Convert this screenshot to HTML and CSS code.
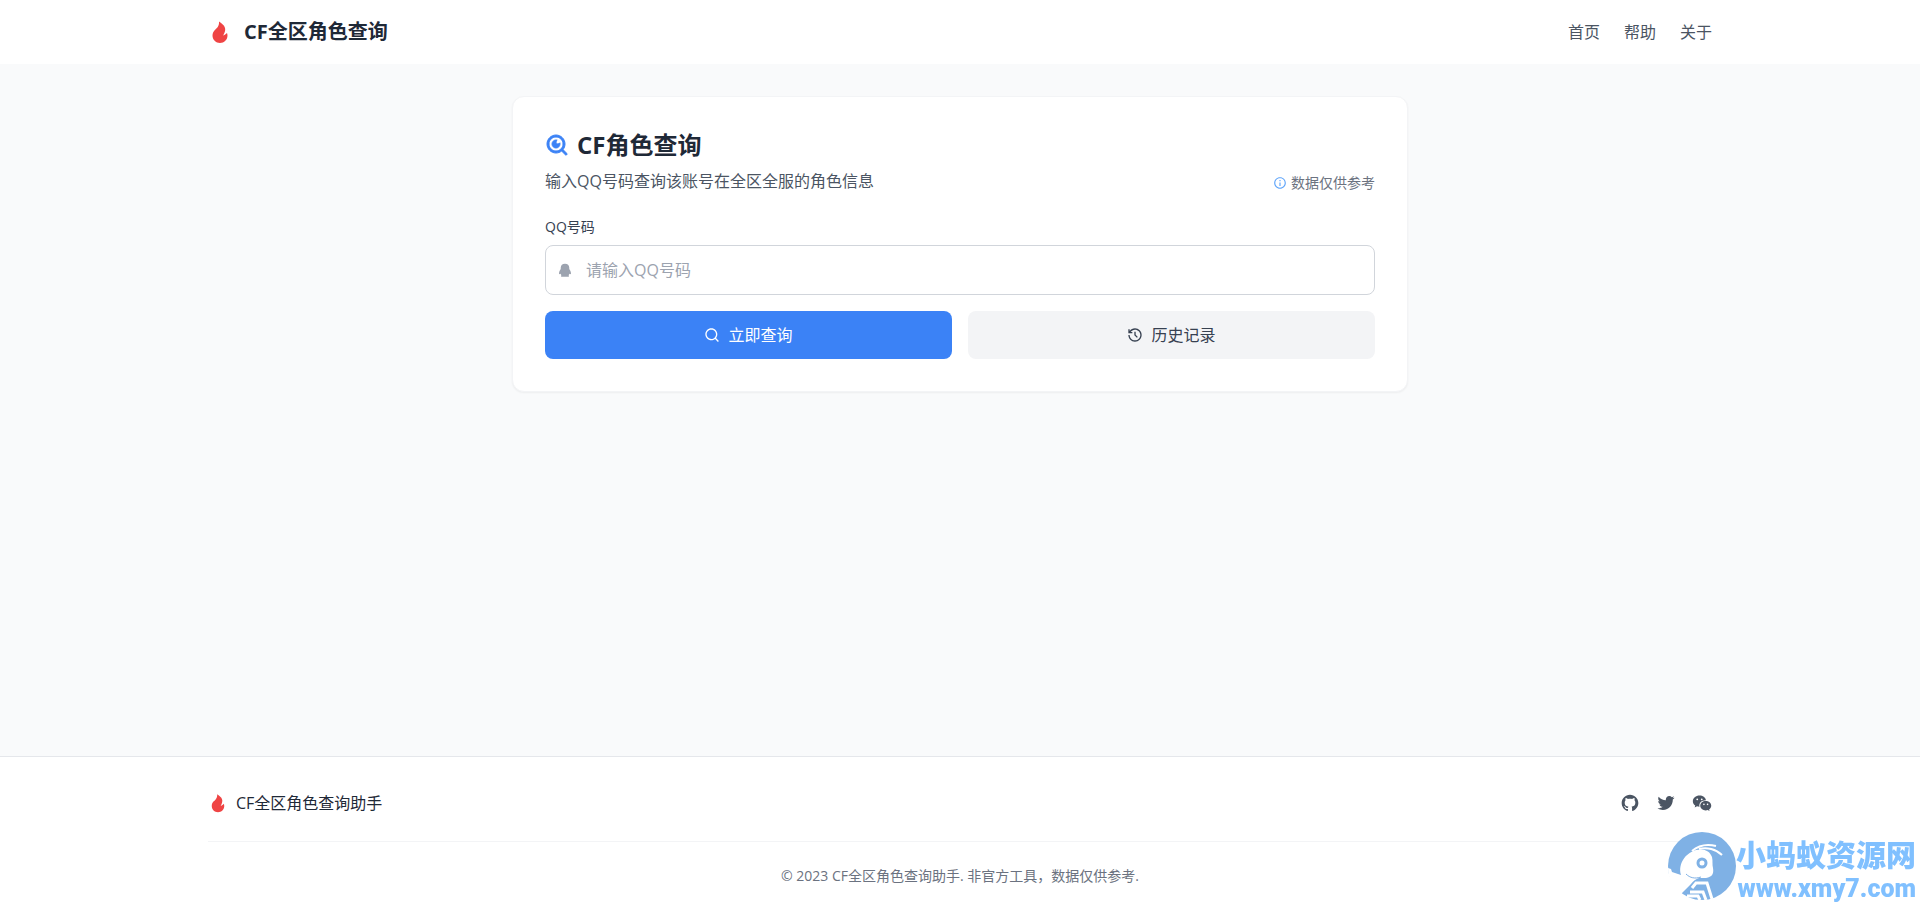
FILE: index.html
```html
<!DOCTYPE html>
<html lang="zh-CN">
<head>
  <meta charset="UTF-8">
  <meta name="viewport" content="width=device-width, initial-scale=1.0">
  <title>CF全区角色查询</title>
  <link rel="stylesheet" href="styles.css">
</head>
<body>
  <!-- icon shapes used more than once -->
  <svg class="sprite" aria-hidden="true">
    <symbol id="icon-fire" viewBox="0 0 24 24">
      <path d="M12 23C16.1421 23 19.5 19.6421 19.5 15.5C19.5 14.6345 19.2697 13.8032 19 13.0296C17.3333 14.6765 16.0667 15.5 15.2 15.5C19.1954 8.5 17 5.5 11 1.5C11.5 6.49951 8.20403 8.77375 6.86179 10.0366C5.40786 11.4045 4.5 13.3462 4.5 15.5C4.5 19.6421 7.85786 23 12 23Z"/>
    </symbol>
  </svg>

  <header class="header">
    <div class="container header-inner">
      <div class="brand">
        <svg class="icon icon-lg fire"><use href="#icon-fire"/></svg>
        <h1>CF全区角色查询</h1>
      </div>
      <nav class="nav">
        <a href="#">首页</a>
        <a href="#">帮助</a>
        <a href="#">关于</a>
      </nav>
    </div>
  </header>

  <main class="main">
    <section class="card">
      <div class="card-head">
        <div>
          <h2>
            <svg class="icon icon-lg search-eye" viewBox="0 0 24 24"><path d="M18.031 16.6168L22.3137 20.8995L20.8995 22.3137L16.6168 18.031C15.0769 19.263 13.124 20 11 20C6.032 20 2 15.968 2 11C2 6.032 6.032 2 11 2C15.968 2 20 6.032 20 11C20 13.124 19.263 15.0769 18.031 16.6168ZM16.0247 15.8748C17.2475 14.6146 18 12.8956 18 11C18 7.1325 14.8675 4 11 4C7.1325 4 4 7.1325 4 11C4 14.8675 7.1325 18 11 18C12.8956 18 14.6146 17.2475 15.8748 16.0247L16.0247 15.8748ZM12.1779 7.17624C11.4834 7.48982 11 8.18846 11 9C11 10.1046 11.8954 11 13 11C13.8115 11 14.5102 10.5166 14.8238 9.82212C14.9383 10.1945 15 10.59 15 11C15 13.2091 13.2091 15 11 15C8.79086 15 7 13.2091 7 11C7 8.79086 8.79086 7 11 7C11.41 7 11.8055 7.06167 12.1779 7.17624Z"/></svg>
            CF角色查询
          </h2>
          <p class="intro">输入QQ号码查询该账号在全区全服的角色信息</p>
        </div>
        <div class="notice">
          <svg class="icon icon-xs" viewBox="0 0 24 24"><path d="M12 22C6.47715 22 2 17.5228 2 12C2 6.47715 6.47715 2 12 2C17.5228 2 22 6.47715 22 12C22 17.5228 17.5228 22 12 22ZM12 20C16.4183 20 20 16.4183 20 12C20 7.58172 16.4183 4 12 4C7.58172 4 4 7.58172 4 12C4 16.4183 7.58172 20 12 20ZM11 7H13V9H11V7ZM11 11H13V17H11V11Z"/></svg>
          <span>数据仅供参考</span>
        </div>
      </div>

      <form id="query-form">
        <label for="qq">QQ号码</label>
        <div class="input-wrap">
          <svg class="icon icon-sm input-icon" viewBox="0 0 24 24"><path d="M12 2.5C8 2.5 5.8 4.8 5.6 8.6V10.6C4.4 12.4 3 15 3 17.2C3 18.6 3.8 18.6 5.2 17.8C5.5 18.6 6.2 19.3 6.9 19.8C5.6 20.3 5.4 22 7 22H17C18.6 22 18.4 20.3 17.1 19.8C17.8 19.3 18.5 18.6 18.8 17.8C20.2 18.6 21 18.6 21 17.2C21 15 19.6 12.4 18.4 10.6V8.6C18.2 4.8 16 2.5 12 2.5Z"/></svg>
          <input type="text" id="qq" name="qq" placeholder="请输入QQ号码">
        </div>
        <div class="actions">
          <button type="submit" class="btn btn-primary">
            <svg class="icon icon-sm" viewBox="0 0 24 24"><path d="M18.031 16.6168L22.3137 20.8995L20.8995 22.3137L16.6168 18.031C15.0769 19.263 13.124 20 11 20C6.032 20 2 15.968 2 11C2 6.032 6.032 2 11 2C15.968 2 20 6.032 20 11C20 13.124 19.263 15.0769 18.031 16.6168ZM16.0247 15.8748C17.2475 14.6146 18 12.8956 18 11C18 7.1325 14.8675 4 11 4C7.1325 4 4 7.1325 4 11C4 14.8675 7.1325 18 11 18C12.8956 18 14.6146 17.2475 15.8748 16.0247L16.0247 15.8748Z"/></svg>
            立即查询
          </button>
          <button type="button" class="btn btn-light">
            <svg class="icon icon-sm" viewBox="0 0 24 24"><path d="M12 2C17.5228 2 22 6.47715 22 12C22 17.5228 17.5228 22 12 22C6.47715 22 2 17.5228 2 12H4C4 16.4183 7.58172 20 12 20C16.4183 20 20 16.4183 20 12C20 7.58172 16.4183 4 12 4C9.25022 4 6.82447 5.38734 5.38451 7.50024L8 7.5V9.5H2V3.5H4L3.99989 5.99918C5.82434 3.57075 8.72873 2 12 2ZM13 7L12.9998 11.585L16.2426 14.8284L14.8284 16.2426L10.9998 12.413L11 7H13Z"/></svg>
            历史记录
          </button>
        </div>
      </form>
    </section>
  </main>

  <footer class="footer">
    <div class="container">
      <div class="footer-top">
        <div class="footer-brand">
          <svg class="icon icon-md fire"><use href="#icon-fire"/></svg>
          <span>CF全区角色查询助手</span>
        </div>
        <div class="social">
          <a href="#" aria-label="GitHub">
            <svg class="icon icon-md" viewBox="0 0 24 24"><path d="M12.001 2C6.47598 2 2.00098 6.475 2.00098 12C2.00098 16.425 4.86348 20.1625 8.83848 21.4875C9.33848 21.575 9.52598 21.275 9.52598 21.0125C9.52598 20.775 9.51348 19.9875 9.51348 19.15C7.00098 19.6125 6.35098 18.5375 6.15098 17.975C6.03848 17.6875 5.55098 16.8 5.12598 16.5625C4.77598 16.375 4.27598 15.9125 5.11348 15.9C5.90098 15.8875 6.46348 16.625 6.65098 16.925C7.55098 18.4375 8.98848 18.0125 9.56348 17.75C9.65098 17.1 9.91348 16.6625 10.201 16.4125C7.97598 16.1625 5.65098 15.3 5.65098 11.475C5.65098 10.3875 6.03848 9.4875 6.67598 8.7875C6.57598 8.5375 6.22598 7.5125 6.77598 6.1375C6.77598 6.1375 7.61348 5.875 9.52598 7.1625C10.326 6.9375 11.176 6.825 12.026 6.825C12.876 6.825 13.726 6.9375 14.526 7.1625C16.4385 5.8625 17.276 6.1375 17.276 6.1375C17.826 7.5125 17.476 8.5375 17.376 8.7875C18.0135 9.4875 18.401 10.375 18.401 11.475C18.401 15.3125 16.0635 16.1625 13.8385 16.4125C14.201 16.725 14.5135 17.325 14.5135 18.2625C14.5135 19.6 14.501 20.675 14.501 21.0125C14.501 21.275 14.6885 21.5875 15.1885 21.4875C19.259 20.1133 21.9999 16.2963 22.001 12C22.001 6.475 17.526 2 12.001 2Z"/></svg>
          </a>
          <a href="#" aria-label="Twitter">
            <svg class="icon icon-md" viewBox="0 0 24 24"><path d="M22.2125 5.65605C21.4491 5.99375 20.6395 6.21555 19.8106 6.31411C20.6839 5.79132 21.3374 4.9689 21.6493 4.00005C20.8287 4.48761 19.9305 4.83077 18.9938 5.01461C18.2031 4.17106 17.098 3.69303 15.9418 3.69434C13.6326 3.69434 11.7597 5.56661 11.7597 7.87683C11.7597 8.20458 11.7973 8.52242 11.8676 8.82909C8.39047 8.65404 5.31007 6.99005 3.24678 4.45941C2.87529 5.09767 2.68005 5.82318 2.68104 6.56167C2.68104 8.01259 3.4196 9.29324 4.54149 10.043C3.87737 10.022 3.22788 9.84264 2.64718 9.51973C2.64654 9.5373 2.64654 9.55487 2.64654 9.57148C2.64654 11.5984 4.08819 13.2892 6.00199 13.6731C5.6428 13.7703 5.27232 13.8194 4.90022 13.8191C4.62997 13.8191 4.36771 13.7942 4.11279 13.7453C4.64531 15.4065 6.18886 16.6159 8.0196 16.6491C6.53813 17.8118 4.70869 18.4426 2.82543 18.4399C2.49212 18.4402 2.15909 18.4205 1.82812 18.3811C3.74004 19.6102 5.96552 20.2625 8.23842 20.2601C15.9316 20.2601 20.138 13.8875 20.138 8.36111C20.138 8.1803 20.1336 7.99886 20.1256 7.81997C20.9443 7.22845 21.651 6.49567 22.2125 5.65605Z"/></svg>
          </a>
          <a href="#" aria-label="微信">
            <svg class="icon icon-md" viewBox="0 0 24 24" fill-rule="evenodd">
              <path d="M9 3C4.6 3 1 6 1 9.8C1 12 2.1 13.8 3.9 15.1L3.2 17.4L6 16C6.9 16.3 7.9 16.5 9 16.5C8 12 11.5 8.6 16.8 8.7C16.2 5.4 12.9 3 9 3ZM6.3 6.5A1.1 1.1 0 1 1 6.3 8.7A1.1 1.1 0 1 1 6.3 6.5ZM11.7 6.5A1.1 1.1 0 1 1 11.7 8.7A1.1 1.1 0 1 1 11.7 6.5Z"/>
              <path d="M16.5 9.7C12.9 9.7 9.9 12.2 9.9 15.3C9.9 18.4 12.9 20.9 16.5 20.9C17.3 20.9 18.1 20.8 18.8 20.5L21.1 21.7L20.5 19.7C22.1 18.7 23.1 17.1 23.1 15.3C23.1 12.2 20.1 9.7 16.5 9.7ZM14.3 12.6A1 1 0 1 1 14.3 14.6A1 1 0 1 1 14.3 12.6ZM18.7 12.6A1 1 0 1 1 18.7 14.6A1 1 0 1 1 18.7 12.6Z"/>
            </svg>
          </a>
        </div>
      </div>
      <p class="copyright">© 2023 CF全区角色查询助手. 非官方工具，数据仅供参考.</p>
    </div>
  </footer>

  <!-- site badge, bottom right corner -->
  <div class="badge">
    <svg class="badge-logo" viewBox="0 0 68 70">
      <circle cx="34" cy="35" r="34" fill="#7fb1e5"/>
      <!-- head and body -->
      <path d="M0 37L3 38L4 41L13 44C11 38 13 32 15 29C18 24 22 21 28 19C36 17 42 20 44 26C45 30 44 34 45 37C46 43 44 46 38 47H31C28 48 25 50 23 53L13 63C5 57 0 48 0 37Z" fill="#fff"/>
      <!-- feelers -->
      <path d="M24 20C31 14 40 13 48 15M31 18C39 16 48 18 54 24" fill="none" stroke="#fff" stroke-width="2"/>
      <circle cx="34" cy="32" r="4" fill="#fff" stroke="#7fb1e5" stroke-width="3"/>
      <!-- body rings -->
      <path d="M18 43C22 47 27 48 33 46" fill="none" stroke="#7fb1e5" stroke-width="1"/>
      <path d="M24 57L28 52H39L44 68M22 61H35L38 69M19 65H30L32 69" fill="none" stroke="#fff" stroke-width="3"/>
    </svg>
    <div class="badge-text">
      <span class="badge-name">小蚂蚁资源网</span>
      <span class="badge-url">www.xmy7.com</span>
    </div>
  </div>
</body>
</html>
```
FILE: styles.css
```css
* {
  box-sizing: border-box;
  margin: 0;
  padding: 0;
}

body {
  display: flex;
  flex-direction: column;
  min-height: 100vh;
  font-family: "Open Sans", "Noto Sans CJK SC", sans-serif;
  font-size: 16px;
  line-height: 24px;
  color: #1f2937;
  background-color: #f9fafb;
}

a {
  color: #4b5563;
  text-decoration: none;
}

a:hover {
  color: #3b82f6;
}

.sprite {
  display: none;
}

.container {
  width: 100%;
  max-width: 1536px;
  margin: 0 auto;
  padding: 0 16px;
}

/* icons */
.icon {
  flex-shrink: 0;
  fill: currentColor;
}

.icon-xs {
  width: 14px;
  height: 14px;
}

.icon-sm {
  width: 16px;
  height: 16px;
}

.icon-md {
  width: 20px;
  height: 20px;
}

.icon-lg {
  width: 24px;
  height: 24px;
}

.fire {
  color: #ef4444;
}

/* header */
.header {
  background-color: #fff;
}

.header-inner {
  display: flex;
  align-items: center;
  justify-content: space-between;
  height: 64px;
}

.brand {
  display: flex;
  align-items: center;
  gap: 12px;
}

.brand h1 {
  font-size: 20px;
  line-height: 28px;
}

.nav {
  display: flex;
  gap: 24px;
}

/* query card */
.main {
  flex: 1;
  padding: 32px 16px;
}

.card {
  max-width: 896px;
  margin: 0 auto;
  padding: 32px;
  background-color: #fff;
  border: 1px solid #f3f4f6;
  border-radius: 12px;
  box-shadow: 0 1px 2px rgba(0, 0, 0, 0.05);
}

.card-head {
  display: flex;
  align-items: flex-end;
  justify-content: space-between;
  margin-bottom: 24px;
}

.card h2 {
  display: flex;
  align-items: center;
  gap: 8px;
  margin-bottom: 8px;
  font-size: 24px;
  line-height: 32px;
}

.search-eye {
  color: #3b82f6;
  stroke: currentColor;
  stroke-width: 1px;
}

.intro {
  color: #4b5563;
}

.notice {
  display: flex;
  align-items: center;
  gap: 4px;
  font-size: 14px;
  line-height: 20px;
  color: #6b7280;
}

.notice .icon {
  color: #60a5fa;
}

label {
  display: block;
  margin-bottom: 8px;
  font-size: 14px;
  line-height: 20px;
  color: #374151;
}

.input-wrap {
  position: relative;
  display: flex;
  align-items: center;
  margin-bottom: 16px;
}

.input-icon {
  position: absolute;
  left: 12px;
  color: #9ca3af;
}

input {
  width: 100%;
  height: 50px;
  padding: 12px 16px 12px 40px;
  font: inherit;
  color: inherit;
  background-color: #fff;
  border: 1px solid #d1d5db;
  border-radius: 8px;
}

input::placeholder {
  color: #9ca3af;
}

input:focus {
  outline: none;
  border-color: #3b82f6;
}

.actions {
  display: grid;
  grid-template-columns: 1fr 1fr;
  gap: 16px;
}

.btn {
  display: flex;
  align-items: center;
  justify-content: center;
  gap: 8px;
  padding: 12px 24px;
  font: inherit;
  border: none;
  border-radius: 8px;
  cursor: pointer;
}

.btn-primary {
  color: #fff;
  background-color: #3b82f6;
}

.btn-primary:hover {
  background-color: #2563eb;
}

.btn-light {
  color: #374151;
  background-color: #f3f4f6;
}

.btn-light:hover {
  background-color: #e5e7eb;
}

/* footer */
.footer {
  padding: 32px 0;
  background-color: #fff;
  border-top: 1px solid #e5e7eb;
}

.footer-top {
  display: flex;
  align-items: center;
  justify-content: space-between;
  height: 28px;
  margin-bottom: 24px;
}

.footer-brand {
  display: flex;
  align-items: center;
  gap: 8px;
}

.social {
  display: flex;
  gap: 16px;
}

.social a {
  display: flex;
}

.copyright {
  padding-top: 24px;
  font-size: 14px;
  line-height: 20px;
  text-align: center;
  color: #6b7280;
  border-top: 1px solid #f3f4f6;
}

/* corner badge */
.badge {
  position: fixed;
  right: 4px;
  bottom: 13px;
  display: flex;
  align-items: flex-start;
  color: #80c0ff;
  font-weight: 900;
}

.badge-logo {
  width: 68px;
  height: 70px;
}

.badge-text {
  display: flex;
  flex-direction: column;
  align-items: flex-end;
  padding-top: 6px;
}

.badge-name {
  font-size: 30px;
  line-height: 36px;
}

.badge-url {
  font-family: Roboto, sans-serif;
  font-size: 25px;
  line-height: 32px;
}
```
